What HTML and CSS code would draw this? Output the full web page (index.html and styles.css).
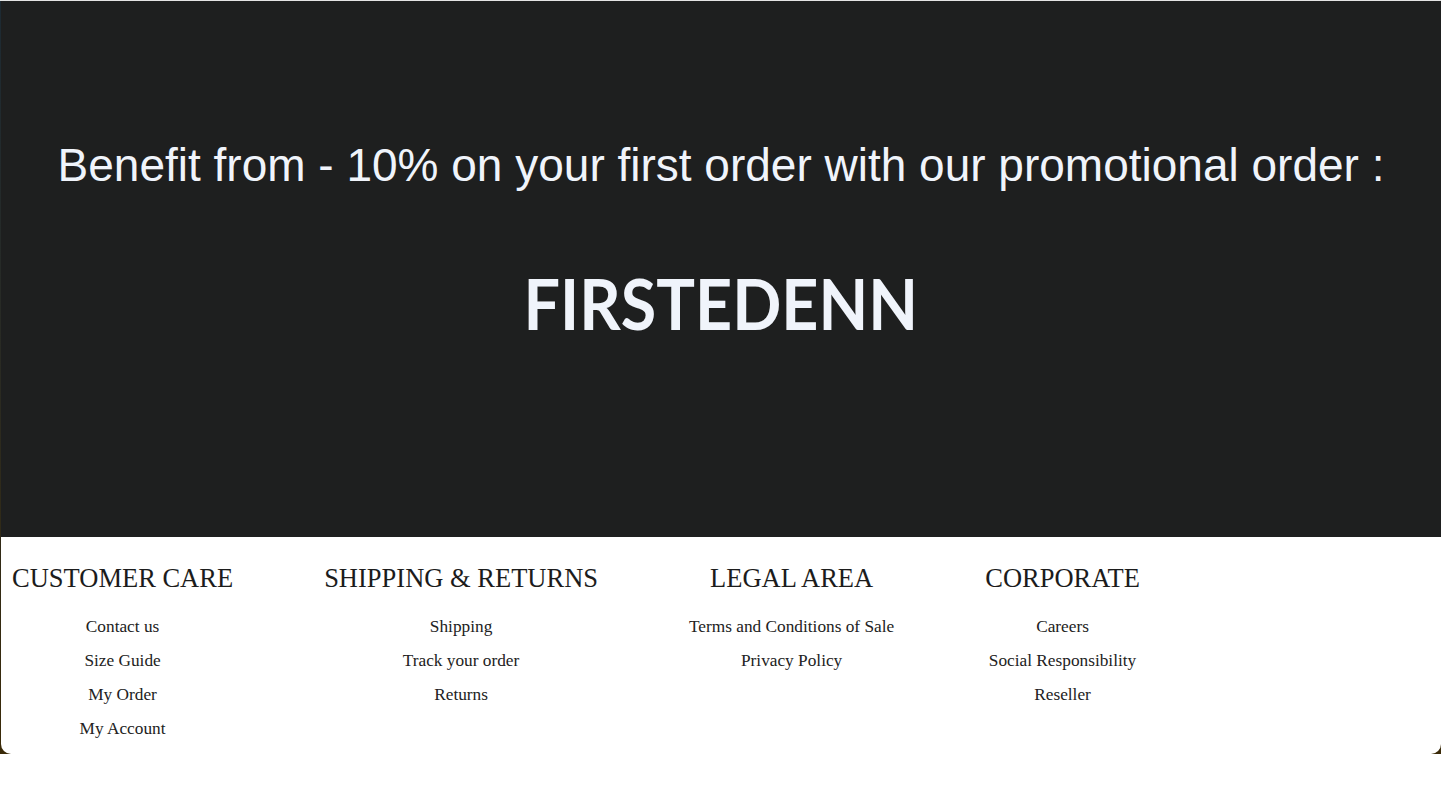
FILE: index.html
```html
<!DOCTYPE html>
<html lang="en">
<head>
<meta charset="utf-8">
<title>Promo</title>
<link rel="stylesheet" href="styles.css">
</head>
<body>
<div class="frame">
  <div class="card">
    <section class="promo">
      <p class="promo-text">Benefit from - 10% on your first order with our promotional order :</p>
      <p class="promo-code">FIRSTEDENN</p>
    </section>
    <footer class="footer">
      <div class="col">
        <h3 class="col-title">CUSTOMER CARE</h3>
        <a class="col-link">Contact us</a>
        <a class="col-link">Size Guide</a>
        <a class="col-link">My Order</a>
        <a class="col-link">My Account</a>
      </div>
      <div class="col">
        <h3 class="col-title">SHIPPING &amp; RETURNS</h3>
        <a class="col-link">Shipping</a>
        <a class="col-link">Track your order</a>
        <a class="col-link">Returns</a>
      </div>
      <div class="col">
        <h3 class="col-title">LEGAL AREA</h3>
        <a class="col-link">Terms and Conditions of Sale</a>
        <a class="col-link">Privacy Policy</a>
      </div>
      <div class="col">
        <h3 class="col-title">CORPORATE</h3>
        <a class="col-link">Careers</a>
        <a class="col-link">Social Responsibility</a>
        <a class="col-link">Reseller</a>
      </div>
    </footer>
  </div>
</div>
</body>
</html>
```
FILE: styles.css
```css
html, body {
  margin: 0;
  padding: 0;
  background: #ffffff;
}
.frame {
  border-top: 1px solid #e4e4e4;
  background: linear-gradient(180deg, #1d2a33 0%, #2a2a22 50%, #3a2a08 100%);
  padding-left: 1px;
}
.card {
  background: #ffffff;
  border-radius: 0 0 10px 10px;
  overflow: hidden;
}
.promo {
  background: #1e1f1f;
  height: 536px;
  display: flex;
  flex-direction: column;
  align-items: center;
  color: #f0f4fb;
}
.promo-text {
  margin: 138px 0 0;
  font-family: "Liberation Sans", Arial, sans-serif;
  font-size: 46px;
  line-height: 52px;
}
.promo-code {
  margin: 72px 0 0;
  font-family: Lato, "Open Sans", sans-serif;
  font-weight: 700;
  font-size: 71px;
  line-height: 80px;
  transform: scaleX(0.91);
}
.footer {
  display: flex;
  gap: 91px;
  padding: 25px 0 8px 11px;
  font-family: "Liberation Serif", "Times New Roman", serif;
  color: #222222;
}
.col {
  display: flex;
  flex-direction: column;
  align-items: center;
}
.col-title {
  margin: 0 0 16px;
  font-weight: 400;
  font-size: 26.5px;
  line-height: 32px;
  color: #1c1c1c;
}
.col-link {
  font-size: 17.3px;
  line-height: 34px;
  color: #222222;
}
```
